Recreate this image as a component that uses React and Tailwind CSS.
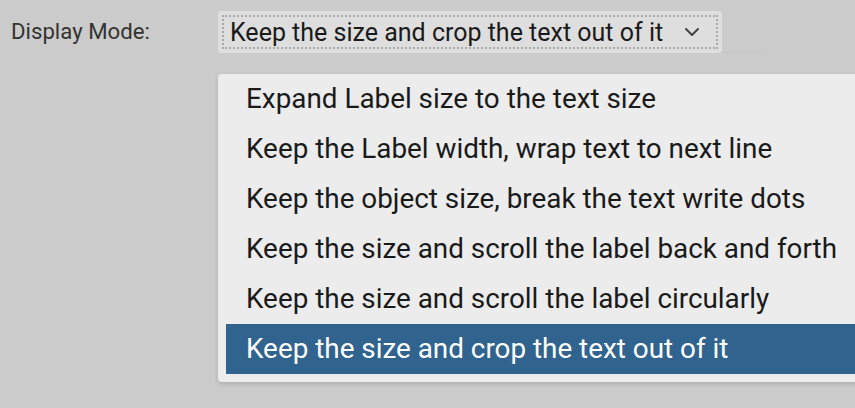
const OPTIONS = [
  "Expand Label size to the text size",
  "Keep the Label width, wrap text to next line",
  "Keep the object size, break the text write dots",
  "Keep the size and scroll the label back and forth",
  "Keep the size and scroll the label circularly",
  "Keep the size and crop the text out of it",
];

const Chevron = () => (
  <svg width="16" height="10" viewBox="0 0 16 10" fill="none" stroke="#444" strokeWidth={2} strokeLinecap="round" strokeLinejoin="round">
    <path d="M2 2l6 6 6-6" />
  </svg>
);

export default function App() {
  const selected = 5;
  return (
    <div
      className="relative w-[855px] h-[408px] overflow-hidden bg-[#cbcbcb]"
      style={{ fontFamily: "Roboto, 'Liberation Sans', sans-serif" }}
    >
      {/* Row: label + select */}
      <div className="flex items-center pt-[11px]">
        <span className="w-[218px] pl-[11px] text-[22.2px] text-[#333333]">Display Mode:</span>
        <div className="flex items-end">
          <div className="h-[42px] w-[504px] rounded-[3px] bg-[#dedede] p-[4px]">
            <div className="flex h-full items-center justify-between border-2 border-dotted border-[#a9a9a9] pl-[6px] pr-[16px]">
              <span className="text-[25px] leading-none text-[#1a1a1a]">
                Keep the size and crop the text out of it
              </span>
              <Chevron />
            </div>
          </div>
          <div className="h-px w-[41px] bg-[#c4c4c4]" />
        </div>
      </div>

      {/* Dropdown list */}
      <div className="absolute left-[218px] top-[74px] w-[660px] rounded-[4px] bg-[#ececec] pb-[8px] pl-[8px] shadow-[0_2px_4px_rgba(0,0,0,0.15)]">
        {OPTIONS.map((opt, i) => (
          <div
            key={opt}
            className={
              i === selected
                ? "flex h-[50px] items-center whitespace-nowrap bg-[#30648f] pl-[20px] text-[27.85px] text-white"
                : "flex h-[50px] items-center whitespace-nowrap pl-[20px] text-[27.85px] text-[#1a1a1a]"
            }
          >
            {opt}
          </div>
        ))}
      </div>
    </div>
  );
}
